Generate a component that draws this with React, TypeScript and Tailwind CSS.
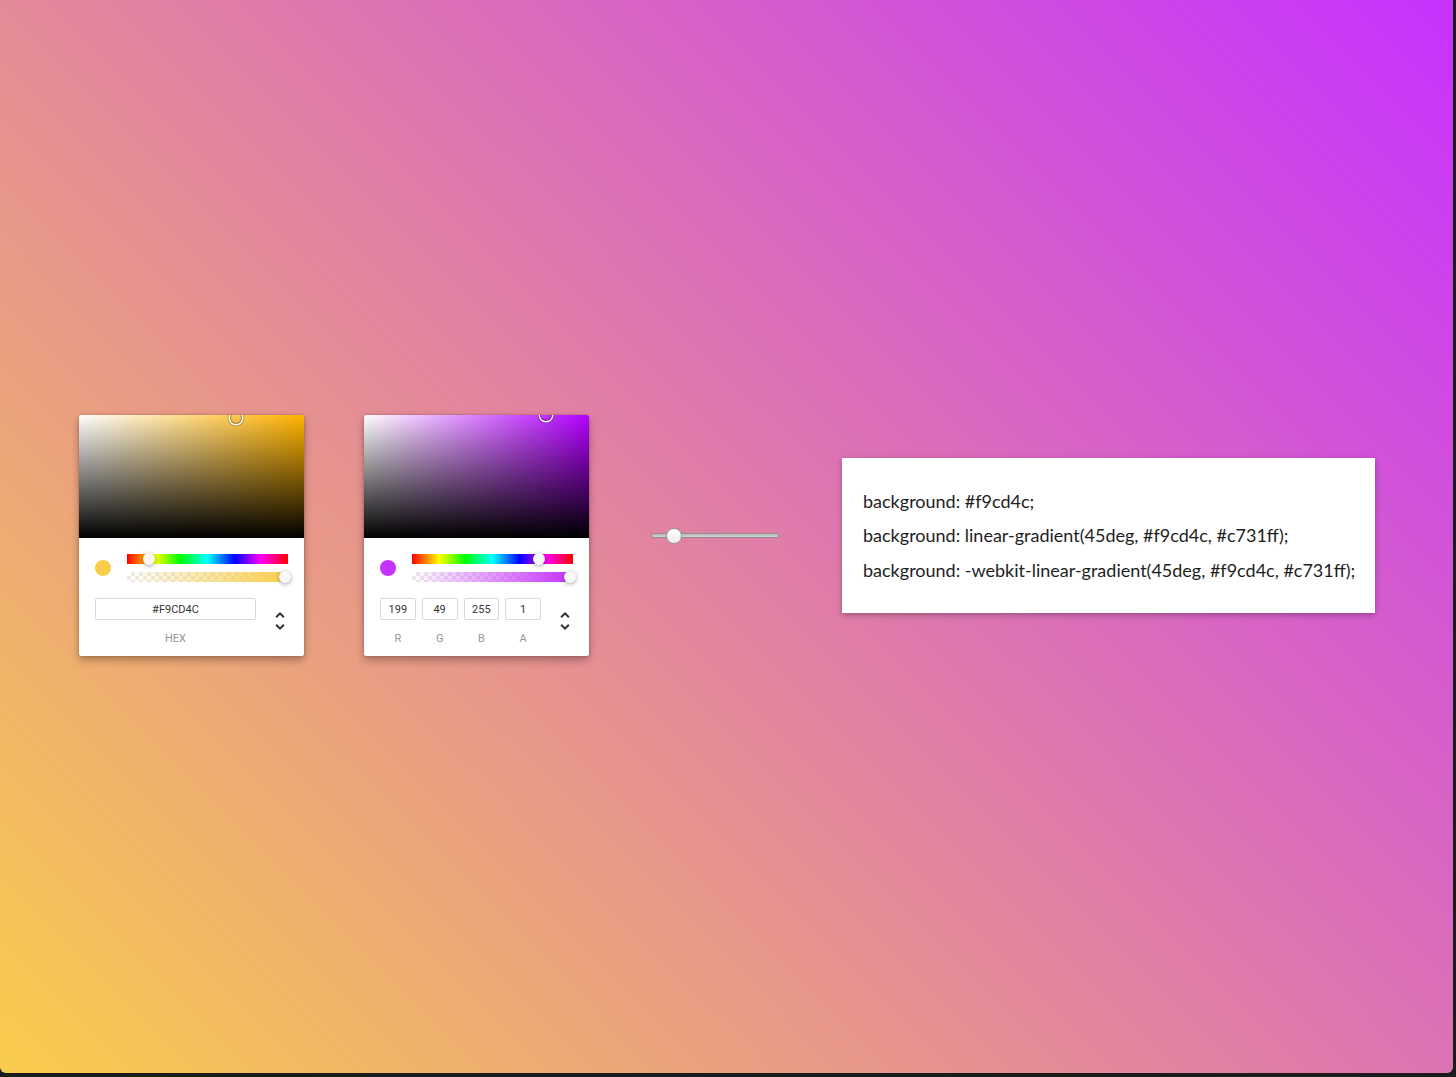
import React from "react";

const ARROWS =
  "M12,18.17L8.83,15L7.42,16.41L12,21L16.59,16.41L15.17,15M12,5.83L15.17,9L16.58,7.59L12,3L7.41,7.59L8.83,9L12,5.83Z";

function Picker({
  hueColor,
  color,
  sx,
  sy,
  hueX,
  fields,
}: {
  hueColor: string;
  color: string;
  sx: number;
  sy: number;
  hueX: number;
  fields: { value: string; label: string }[];
}) {
  return (
    <div
      className="w-[225px] bg-white rounded-[2px] shadow-[0_0_2px_rgba(0,0,0,0.3),0_4px_8px_rgba(0,0,0,0.3)] overflow-hidden"
      style={{ fontFamily: "Roboto, 'Liberation Sans', sans-serif" }}
    >
      <div className="relative h-[123px]" style={{ background: hueColor }}>
        <div className="absolute inset-0 bg-gradient-to-r from-white to-[rgba(255,255,255,0)]" />
        <div className="absolute inset-0 bg-gradient-to-t from-black to-[rgba(0,0,0,0)]" />
        <div
          className="absolute w-[12px] h-[12px] rounded-full shadow-[0_0_0_1.5px_#fff,inset_0_0_1px_1px_rgba(0,0,0,0.3),0_0_1px_2px_rgba(0,0,0,0.4)] -translate-x-[6px] -translate-y-[6px]"
          style={{ left: sx, top: sy }}
        />
      </div>
      <div className="pt-4 px-4 pb-[11px]">
        <div className="flex">
          <div className="w-[32px]">
            <div
              className="mt-[6px] w-4 h-4 rounded-full"
              style={{ background: color }}
            />
          </div>
          <div className="flex-1">
            <div
              className="relative h-[10px] mb-2"
              style={{
                background:
                  "linear-gradient(to right, #f00 0%, #ff0 17%, #0f0 33%, #0ff 50%, #00f 67%, #f0f 83%, #f00 100%)",
              }}
            >
              <div
                className="absolute top-[-1px] w-3 h-3 rounded-full bg-[#f8f8f8] shadow-[0_1px_4px_0_rgba(0,0,0,0.37)] -translate-x-[6px]"
                style={{ left: hueX }}
              />
            </div>
            <div className="relative h-[10px]">
              <div
                className="absolute inset-0"
                style={{
                  backgroundColor: "#fff",
                  backgroundImage:
                    "linear-gradient(45deg, rgba(0,0,0,0.08) 25%, transparent 25%, transparent 75%, rgba(0,0,0,0.08) 75%), linear-gradient(45deg, rgba(0,0,0,0.08) 25%, transparent 25%, transparent 75%, rgba(0,0,0,0.08) 75%)",
                  backgroundSize: "8px 8px",
                  backgroundPosition: "0 0, 4px 4px",
                }}
              />
              <div
                className="absolute inset-0"
                style={{
                  background: `linear-gradient(to right, rgba(0,0,0,0) 0%, ${color} 100%)`,
                }}
              />
              <div className="absolute top-[-1px] right-[-3px] w-3 h-3 rounded-full bg-[#f8f8f8] shadow-[0_1px_4px_0_rgba(0,0,0,0.37)]" />
            </div>
          </div>
        </div>
        <div className="flex pt-4">
          <div className="flex flex-1 -ml-[6px]">
            {fields.map((f) => (
              <div key={f.label} className="flex-1 pl-[6px]">
                <div className="h-[22px] pt-[2px] rounded-[2px] shadow-[inset_0_0_0_1px_#dadada] text-[11px] text-[#333] flex items-center justify-center">
                  {f.value}
                </div>
                <div className="mt-[12px] text-[11px] leading-[13px] text-[#969696] text-center uppercase">
                  {f.label}
                </div>
              </div>
            ))}
          </div>
          <div className="w-[32px] flex justify-end">
            <svg
              viewBox="0 0 24 24"
              className="w-6 h-6 mt-[11px] -mr-[4px]"
              fill="#333"
            >
              <path d={ARROWS} />
            </svg>
          </div>
        </div>
      </div>
    </div>
  );
}

export default function App() {
  return (
    <div className="w-[1456px] h-[1077px] bg-[#1b1b1b] overflow-hidden">
      <div className="w-[1453px] h-[1073px] rounded-b-[6px] bg-[linear-gradient(45deg,#f9cd4c,#c731ff)] pt-[415px] pl-[79px]">
        <div className="flex items-center">
          <Picker
            hueColor="#ffb300"
            color="#f9cd4c"
            sx={157}
            sy={3}
            hueX={22}
            fields={[{ value: "#F9CD4C", label: "hex" }]}
          />
          <div className="ml-[60px]">
            <Picker
              hueColor="#b300ff"
              color="#c731ff"
              sx={182}
              sy={0}
              hueX={127}
              fields={[
                { value: "199", label: "r" },
                { value: "49", label: "g" },
                { value: "255", label: "b" },
                { value: "1", label: "a" },
              ]}
            />
          </div>
          <div className="ml-[62px] w-[128px] h-[16px] relative flex items-center">
            <div className="w-full h-[5px] rounded-full bg-gradient-to-b from-[#b8b8b8] to-[#d4d4d4] border border-[#8f8f8f]" />
            <div className="absolute left-[15px] top-0 w-4 h-4 rounded-full bg-gradient-to-b from-white to-[#ececec] border border-[#9a9a9a]" />
          </div>
          <div
            className="ml-[63px] w-[533px] bg-white pl-[21px] pt-[26px] pb-[26px] shadow-[0_2px_6px_rgba(0,0,0,0.3)] text-[18px] leading-[34.5px] text-[#1e1e1e]"
            style={{ fontFamily: "Lato, 'Liberation Sans', sans-serif" }}
          >
            <p>background: #f9cd4c;</p>
            <p>background: linear-gradient(45deg, #f9cd4c, #c731ff);</p>
            <p>background: -webkit-linear-gradient(45deg, #f9cd4c, #c731ff);</p>
          </div>
        </div>
      </div>
    </div>
  );
}
